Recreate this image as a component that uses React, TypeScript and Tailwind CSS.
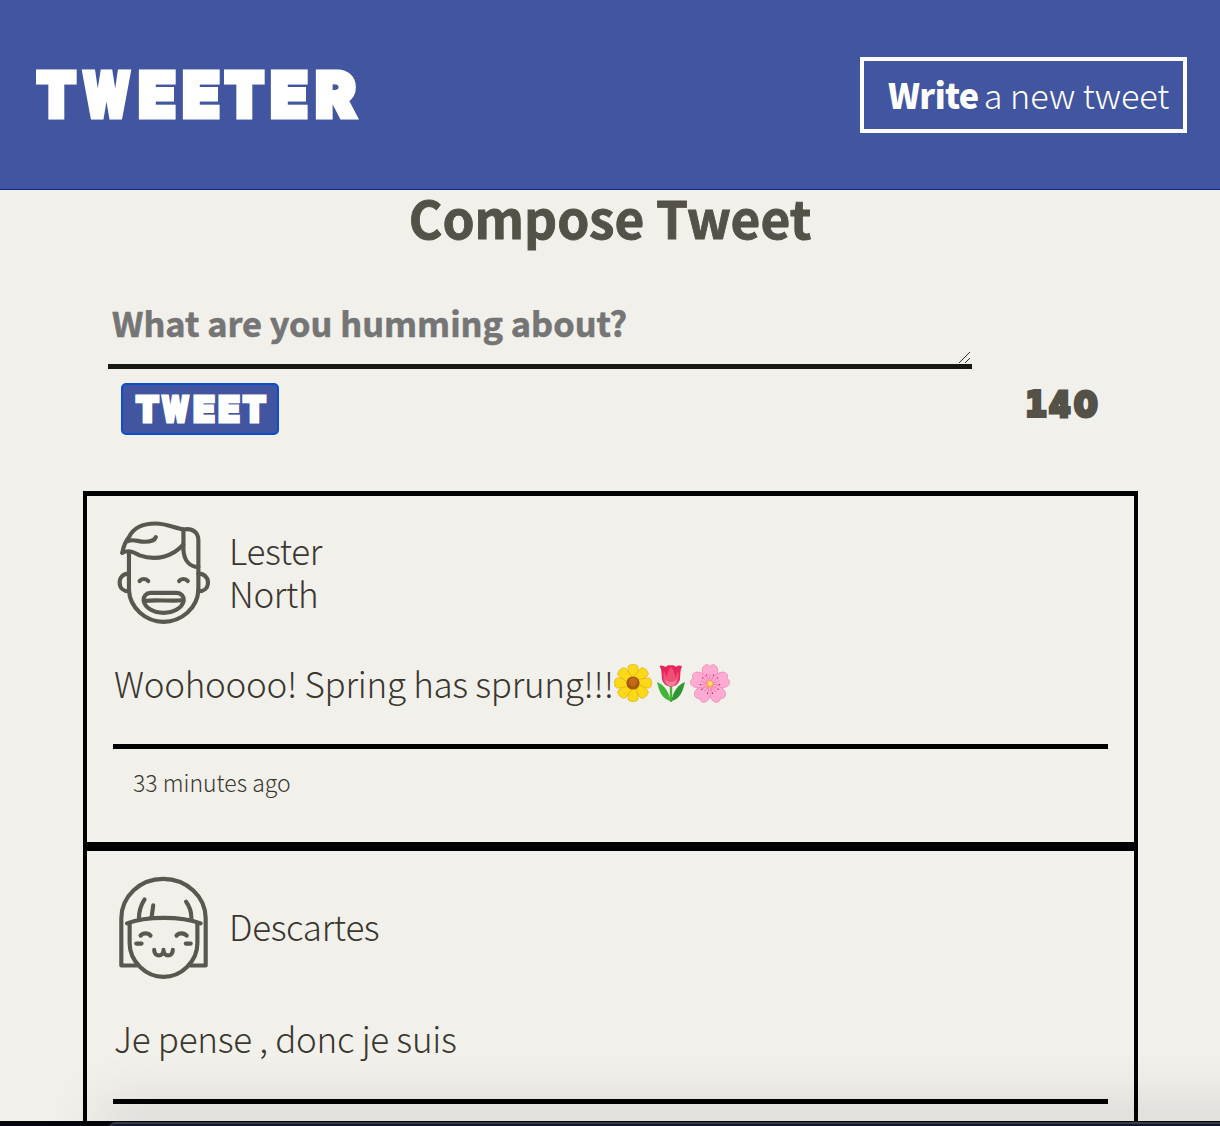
import type { ReactNode } from "react";

const SANS = "font-['Noto_Sans_CJK_SC','Noto_Sans_CJK_JP','Open_Sans',sans-serif]";
const DISPLAY = "font-['Inter',sans-serif] font-black [stroke-linejoin:round]";

function LesterAvatar() {
  return (
    <svg viewBox="112 105 280 315" className="h-[105px] w-[93px] shrink-0" fill="none" stroke="#5a574f" strokeWidth="12.500" strokeLinecap="round" strokeLinejoin="round">
      <path d="M128 203C132 180 138 168 148 156C163 125 196 115 228 115C260 115 285 128 312 133" />
      <path d="M145 168C160 160 175 170 195 170C212 170 225 166 229 156" />
      <path d="M128 203C150 192 165 204 180 211C230 228 280 215 312 178" />
      <path d="M312 133C343 127 357 145 357 165V315" />
      <path d="M312 133V195C314 225 330 245 357 246" />
      <path d="M148 202V315C150 370 200 411 252 411C305 411 355 370 357 315" />
      <path d="M148 266C130 266 120 278 120 293C120 309 132 319 148 319M357 266C375 266 386 278 386 293C386 309 374 319 357 319" />
      <path d="M180 288C186 280 200 280 206 288M299 288C305 280 319 280 325 288" />
      <path d="M213 324H292C305 324 314 334 313 347C308 370 282 384 252 384C222 384 197 370 192 347C191 334 200 324 213 324Z" />
      <path d="M197 348C230 343 275 350 308 346" />
    </svg>
  );
}

function DescartesAvatar() {
  return (
    <svg viewBox="112 135 280 315" className="h-[105px] w-[93px] shrink-0" fill="none" stroke="#5a574f" strokeWidth="12.500" strokeLinecap="round" strokeLinejoin="round">
      <path d="M172 407H125V265C125 200 180 146 251 146C322 146 379 200 379 265V407H333" />
      <path d="M142 280C200 258 305 258 364 280" />
      <path d="M178 265C178 240 184 225 195 208M216 263L221 226M336 265C336 245 330 228 320 215" />
      <path d="M150 280V340C150 395 200 441 252 441C305 441 354 395 354 340V280" />
      <path d="M183 317C190 308 206 308 213 317M291 317C298 308 314 308 322 317" />
      <path d="M170 341H186M319 341H334" />
      <path d="M224 360C224 382 252 382 252 360C252 382 280 382 280 360" />
    </svg>
  );
}

function Daisy() {
  return (
    <svg viewBox="0 0 38 38" className="h-[38px] w-[38px]" role="img" aria-label="🌼">
      {[0, 45, 90, 135, 180, 225, 270, 315].map((a) => (
        <path key={a} d="M16 18L13.900 4C14 1.500 15.500 .8 17 .9C18 .2 20 .2 21 .9C22.500 .8 24 1.500 24.100 4L22 18Z" fill="#fcd916" stroke="#e0ab0a" strokeWidth=".7" strokeLinejoin="round" transform={`rotate(${a} 19 19)`} />
      ))}
      <circle cx="19" cy="19" r="6.600" fill="#a55a0a" />
      <circle cx="19" cy="18" r="4.200" fill="#c06c14" />
    </svg>
  );
}

function Tulip() {
  return (
    <svg viewBox="0 0 38 38" className="h-[38px] w-[38px]" role="img" aria-label="🌷">
      <path d="M19 20V37" stroke="#4fae35" strokeWidth="2.400" strokeLinecap="round" />
      <path d="M18.500 37C10 35 7 27 5 18C12 21 17 27 18.500 37Z" fill="#43b33b" />
      <path d="M19.500 37C28 35 31 27 33 18C26 21 21 27 19.500 37Z" fill="#2e9632" />
      <path d="M7.500 2C10 .8 12 1.800 13.500 3C15 1.500 17 .8 18.500 1.500C20.500 .8 22.500 1.500 24 3C25.500 1.500 28.500 1 30 2.500C28 6 28.500 10 28 15C27 20 23 22.500 19 22.500C15 22.500 11 20 10 15C9.500 10 10 6 7.500 2Z" fill="#e8255a" />
      <path d="M12 7C10.500 14 11 22 19 22.500C27 22 27.500 14 26 7C25 9 24 12 23.500 14C23 9 21 5 19 3C17 5 15 9 14.500 14C14 12 13 9 12 7Z" fill="#f04f78" />
      <path d="M13 15C14 20 16.500 22 19 22.300C22 22 24 20 25 15C22 19 16 19 13 15Z" fill="#f77f98" />
    </svg>
  );
}

function Blossom() {
  return (
    <svg viewBox="0 0 38 38" className="h-[38px] w-[40px] overflow-visible" role="img" aria-label="🌸">
      {[0, 72, 144, 216, 288].map((a) => (
        <g key={a} transform={`rotate(${a} 19 20)`}>
          <path d="M19 20C12 15 9.500 6 12.500 2.500C14.500 0 17.500 .2 19 2.500C20.500 .2 23.500 0 25.500 2.500C28.500 6 26 15 19 20Z" fill="#ffabd2" stroke="#f387b9" strokeWidth=".8" />
          <path d="M19 19V10M18 17L15.500 11.500M20 17L22.500 11.500" stroke="#f07fb2" strokeWidth=".8" />
          <circle cx="15.500" cy="11" r=".7" fill="#b72462" />
          <circle cx="22.500" cy="11" r=".7" fill="#b72462" />
        </g>
      ))}
      <circle cx="19" cy="20" r="3.600" fill="#f9a94a" />
      <circle cx="19" cy="19.500" r="2.200" fill="#ffdc74" />
    </svg>
  );
}

type Glyph = [char: string, cell: string, shape: string];

const LOGO: Glyph[] = [
  ["T", "w-[45px]", "scale-x-[.92]"],
  ["W", "w-[55px]", "scale-x-[.7]"],
  ["E", "w-[46px]", "scale-x-[.98]"],
  ["E", "w-[42px]", "scale-x-[.98]"],
  ["T", "w-[45px]", "scale-x-[.92]"],
  ["E", "w-[44px]", "scale-x-[.98]"],
  ["R", "w-[50px]", "scale-x-[.97]"],
];

const SUBMIT: Glyph[] = [
  ["T", "w-[28px]", "scale-x-[.94]"],
  ["W", "w-[28px]", "scale-x-[.7]"],
  ["E", "w-[30px]", "scale-x-[.98]"],
  ["E", "w-[21px]", "scale-x-[.98]"],
  ["T", "w-[29px]", "scale-x-[.94]"],
];

const COUNTER: Glyph[] = [
  ["1", "w-[22px]", "font-['DejaVu_Sans_Mono',monospace] text-[34px] [-webkit-text-stroke:4px_#545149]"],
  ["4", "w-[26px]", "scale-x-[.86]"],
  ["0", "w-[26px]", "scale-x-[.92]"],
];

function Lettering({ glyphs }: { glyphs: Glyph[] }) {
  return (
    <span className="flex">
      {glyphs.map(([char, cell, shape], i) => (
        <span key={i} className={`flex shrink-0 justify-center ${cell}`}>
          <span className={shape}>{char}</span>
        </span>
      ))}
    </span>
  );
}

function Tweet({ avatar, name, time, children }: { avatar: ReactNode; name: ReactNode; time?: string; children: ReactNode }) {
  return (
    <article className="h-[355px] px-[26px] pt-6 text-[#3a372f]">
      <div className="flex h-[105px] items-center pl-1 font-light">
        {avatar}
        <div className="-mt-1 ml-[19px] text-[35px] leading-[43px] tracking-[-.35px]">{name}</div>
      </div>
      <div className="mt-[36px] flex h-[43px] items-center whitespace-pre pl-px text-[35px] font-light leading-[43px] tracking-[-.28px]">{children}</div>
      <div className="mt-[40px] h-[5px] bg-black" />
      {time && <div className="mt-[18px] pl-5 text-[23px] font-light leading-[30px]">{time}</div>}
    </article>
  );
}

export default function App() {
  return (
    <div className={`${SANS} relative h-[1126px] w-[1220px] overflow-hidden bg-[#f2f0eb]`}>
      <header className="flex h-[190px] items-center justify-between border-b border-[#14268c] bg-[#4155a0] pl-[34px] pr-[33px] text-white">
        <h1 className={`${DISPLAY} text-[62px] leading-[75px] [-webkit-text-stroke:5px_white]`}><Lettering glyphs={LOGO} /></h1>
        <button className="flex h-[76px] w-[327px] items-center border-4 border-white pl-[24px] text-[34.2px] leading-none">
          <span className="font-black tracking-[-.6px]">Write</span>
          <span className="ml-[5px] whitespace-nowrap font-light">a new tweet</span>
        </button>
      </header>

      <main>
        <h2 className="h-[60px] text-center text-[51.4px] font-bold leading-[53px] text-[#545149] [-webkit-text-stroke:.9px_#545149]">Compose Tweet</h2>
        <form className="ml-[108px] mt-[40px] w-[991px]">
          <div className="flex h-[79px] w-[864px] items-start justify-between border-b-[5px] border-[#171714] pl-1 pt-[10px]">
            <span className="text-[34.3px] font-bold leading-[44px] text-[#757575] [-webkit-text-stroke:.6px_#757575]">What are you humming about?</span>
            <svg viewBox="0 0 14 14" className="h-[14px] w-[14px] self-end" stroke="#333" strokeWidth="1">
              <path d="M1 13L12 2M7 13L12 8" />
            </svg>
          </div>
          <div className="flex justify-between">
            <button type="button" className={`${DISPLAY} ml-[13px] mt-[14px] flex h-[52px] w-[158px] items-center rounded-[5px] border-2 border-[#0a50ce] bg-[#4155a0] pl-[10px] text-[36px] leading-none text-white [-webkit-text-stroke:3px_white]`}>
              <Lettering glyphs={SUBMIT} />
            </button>
            <output className={`${DISPLAY} mt-[14px] text-[36px] leading-[42px] text-[#545149] [-webkit-text-stroke:3px_#545149]`}><Lettering glyphs={COUNTER} /></output>
          </div>
        </form>

        <section className="ml-[83px] mt-[56px] w-[1055px] border-x-4 border-t-[5px] border-black">
          <Tweet avatar={<LesterAvatar />} name={<>Lester<br />North</>} time="33 minutes ago">
            <span>Woohoooo! Spring has sprung!!!</span>
            <span className="flex"><Daisy /><Tulip /><Blossom /></span>
          </Tweet>
          <div className="-mt-[9px] h-[9px] bg-black" />
          <Tweet avatar={<DescartesAvatar />} name="Descartes">
            <span>Je pense , donc je suis</span>
          </Tweet>
        </section>
      </main>

      <div className="absolute bottom-0 left-0 h-[5px] w-full bg-[#05060c]" />
      <div className="absolute -bottom-[9px] left-[108px] h-[13px] w-[1200px] rounded-tl-[8px] border-t-2 border-[#353a46] bg-[#111a2c] shadow-[0_0_60px_10px_rgba(0,0,0,0.16)]" />
    </div>
  );
}
